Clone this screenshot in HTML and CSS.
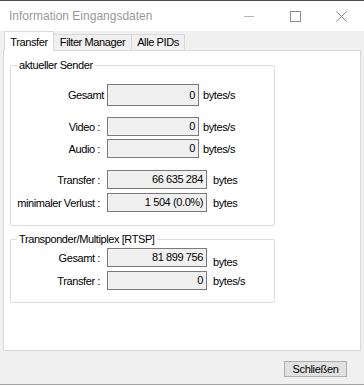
FILE: index.html
```html
<!DOCTYPE html>
<html lang="de">
<head>
    <meta charset="UTF-8">
    <title>Information Eingangsdaten</title>
    <link rel="stylesheet" href="styles.css">
</head>
<body>
    <div class="window">
        <div class="titlebar">
            <span class="title">Information Eingangsdaten</span>
            <div class="controls">
                <span class="ctl"><svg width="10" height="10" viewBox="0 0 10 10"><path d="M0 5.5H10" stroke="#b4b4b4" stroke-width="1"/></svg></span>
                <span class="ctl"><svg width="11" height="11" viewBox="0 0 11 11"><rect x="0.5" y="0.5" width="10" height="10" fill="none" stroke="#8a8a8a" stroke-width="1"/></svg></span>
                <span class="ctl"><svg width="11" height="11" viewBox="0 0 11 11"><path d="M0.5 0.5L10.5 10.5M10.5 0.5L0.5 10.5" stroke="#8a8a8a" stroke-width="1"/></svg></span>
            </div>
        </div>

        <div class="client">
            <div class="tabs">
                <div class="tab tab-active">Transfer</div>
                <div class="tab tab-filter">Filter Manager</div>
                <div class="tab tab-pids">Alle PIDs</div>
            </div>

            <div class="panel">
                <fieldset class="group group-sender">
                    <legend>aktueller Sender</legend>
                    <div class="row row-gesamt">
                        <span class="label near">Gesamt</span>
                        <span class="box box-tall">0</span>
                        <span class="unit">bytes/s</span>
                    </div>
                    <div class="row row-video">
                        <span class="label">Video :</span>
                        <span class="box">0</span>
                        <span class="unit">bytes/s</span>
                    </div>
                    <div class="row row-audio">
                        <span class="label">Audio :</span>
                        <span class="box">0</span>
                        <span class="unit">bytes/s</span>
                    </div>
                    <div class="row row-transfer">
                        <span class="label">Transfer :</span>
                        <span class="box box-wide">66 635 284</span>
                        <span class="unit unit-wide">bytes</span>
                    </div>
                    <div class="row row-verlust">
                        <span class="label">minimaler Verlust :</span>
                        <span class="box box-wide">1 504 (0.0%)</span>
                        <span class="unit unit-wide">bytes</span>
                    </div>
                </fieldset>

                <fieldset class="group group-mux">
                    <legend>Transponder/Multiplex [RTSP]</legend>
                    <div class="row row-mux-gesamt">
                        <span class="label">Gesamt :</span>
                        <span class="box box-wide">81 899 756</span>
                        <span class="unit unit-wide unit-low">bytes</span>
                    </div>
                    <div class="row row-mux-transfer">
                        <span class="label">Transfer :</span>
                        <span class="box box-wide">0</span>
                        <span class="unit unit-wide">bytes/s</span>
                    </div>
                </fieldset>
            </div>

            <div class="footer">
                <button type="button" class="btn">Schließen</button>
            </div>
        </div>
    </div>
</body>
</html>
```

FILE: styles.css
```css
body {
    margin: 0;
    background-color: #ffffff;
    font-family: "Liberation Sans", Arial, sans-serif;
    font-size: 11px;
    color: #000000;
}
.window {
    width: 364px;
    height: 385px;
    box-sizing: border-box;
    background-color: #f0f0f0;
    border-top: 1px solid #4f4f4f;
    border-bottom: 1px solid #a0a0a0;
}
.titlebar {
    display: flex;
    align-items: center;
    height: 30px;
    padding-left: 9px;
    background-color: #ffffff;
}
.title {
    font-size: 12px;
    color: #999999;
}
.controls {
    display: flex;
    margin-left: auto;
    height: 30px;
}
.ctl {
    display: flex;
    align-items: center;
    justify-content: center;
    width: 46px;
    height: 30px;
}

/* tabs */
.tabs {
    display: flex;
    align-items: flex-end;
    height: 19px;
    padding-left: 4px;
}
.tab {
    box-sizing: border-box;
    height: 16px;
    padding-top: 1px;
    text-align: center;
    letter-spacing: -0.4px;
    line-height: 13px;
    background-color: #f0f0f0;
    border: 1px solid #d9d9d9;
    border-bottom: none;
}
.tab-active {
    position: relative;
    z-index: 2;
    width: 50px;
    height: 20px;
    margin-bottom: -1px;
    padding-top: 4px;
    background-color: #ffffff;
}
.tab-filter {
    width: 79px;
    margin-left: -1px;
}
.tab-pids {
    width: 54px;
    margin-left: -1px;
}

/* panel */
.panel {
    position: relative;
    box-sizing: border-box;
    width: 358px;
    height: 301px;
    margin-left: 3px;
    padding: 1px 0 0 6px;
    background-color: #ffffff;
    border: 1px solid #d9d9d9;
}
.group {
    box-sizing: border-box;
    width: 265px;
    margin: 0;
    padding: 0 0 13px 0;
    border: 1px solid #dcdcdc;
    border-radius: 2px;
}
.group legend {
    margin-left: 6px;
    padding: 0 2px;
    line-height: 13px;
    letter-spacing: -0.4px;
}
.group-sender {
    margin-top: 7px;
}
.group-mux {
    margin-top: 7px;
    padding-bottom: 12px;
}
.row {
    display: flex;
    align-items: center;
    height: 19px;
    letter-spacing: -0.4px;
}
.row-gesamt { height: 22px; margin-top: 12px; }
.row-video { margin-top: 11px; }
.row-audio { margin-top: 3px; }
.row-transfer { margin-top: 12px; }
.row-verlust { margin-top: 4px; }
.row-mux-gesamt { margin-top: 2px; }
.row-mux-transfer { margin-top: 4px; }

.label {
    box-sizing: border-box;
    width: 93px;
    padding-right: 4px;
    text-align: right;
    white-space: nowrap;
}
.label.near {
    padding-right: 0;
}
.box {
    box-sizing: border-box;
    width: 92px;
    height: 19px;
    margin-left: 3px;
    padding-right: 3px;
    line-height: 17px;
    text-align: right;
    background-color: #f0f0f0;
    border: 1px solid #7a7a7a;
}
.box-tall {
    height: 22px;
    line-height: 20px;
}
.box-wide {
    width: 100px;
}
.unit {
    margin-left: 4px;
}
.unit-wide {
    margin-left: 6px;
}
.unit-low {
    position: relative;
    top: 4px;
}

/* footer */
.footer {
    display: flex;
    justify-content: flex-end;
    padding: 10px 17px 0 0;
}
.btn {
    box-sizing: border-box;
    width: 63px;
    height: 16px;
    padding: 0;
    font-family: "Liberation Sans", Arial, sans-serif;
    font-size: 11px;
    letter-spacing: -0.3px;
    line-height: 14px;
    color: #000000;
    background-color: #e1e1e1;
    border: 1px solid #adadad;
}
```
